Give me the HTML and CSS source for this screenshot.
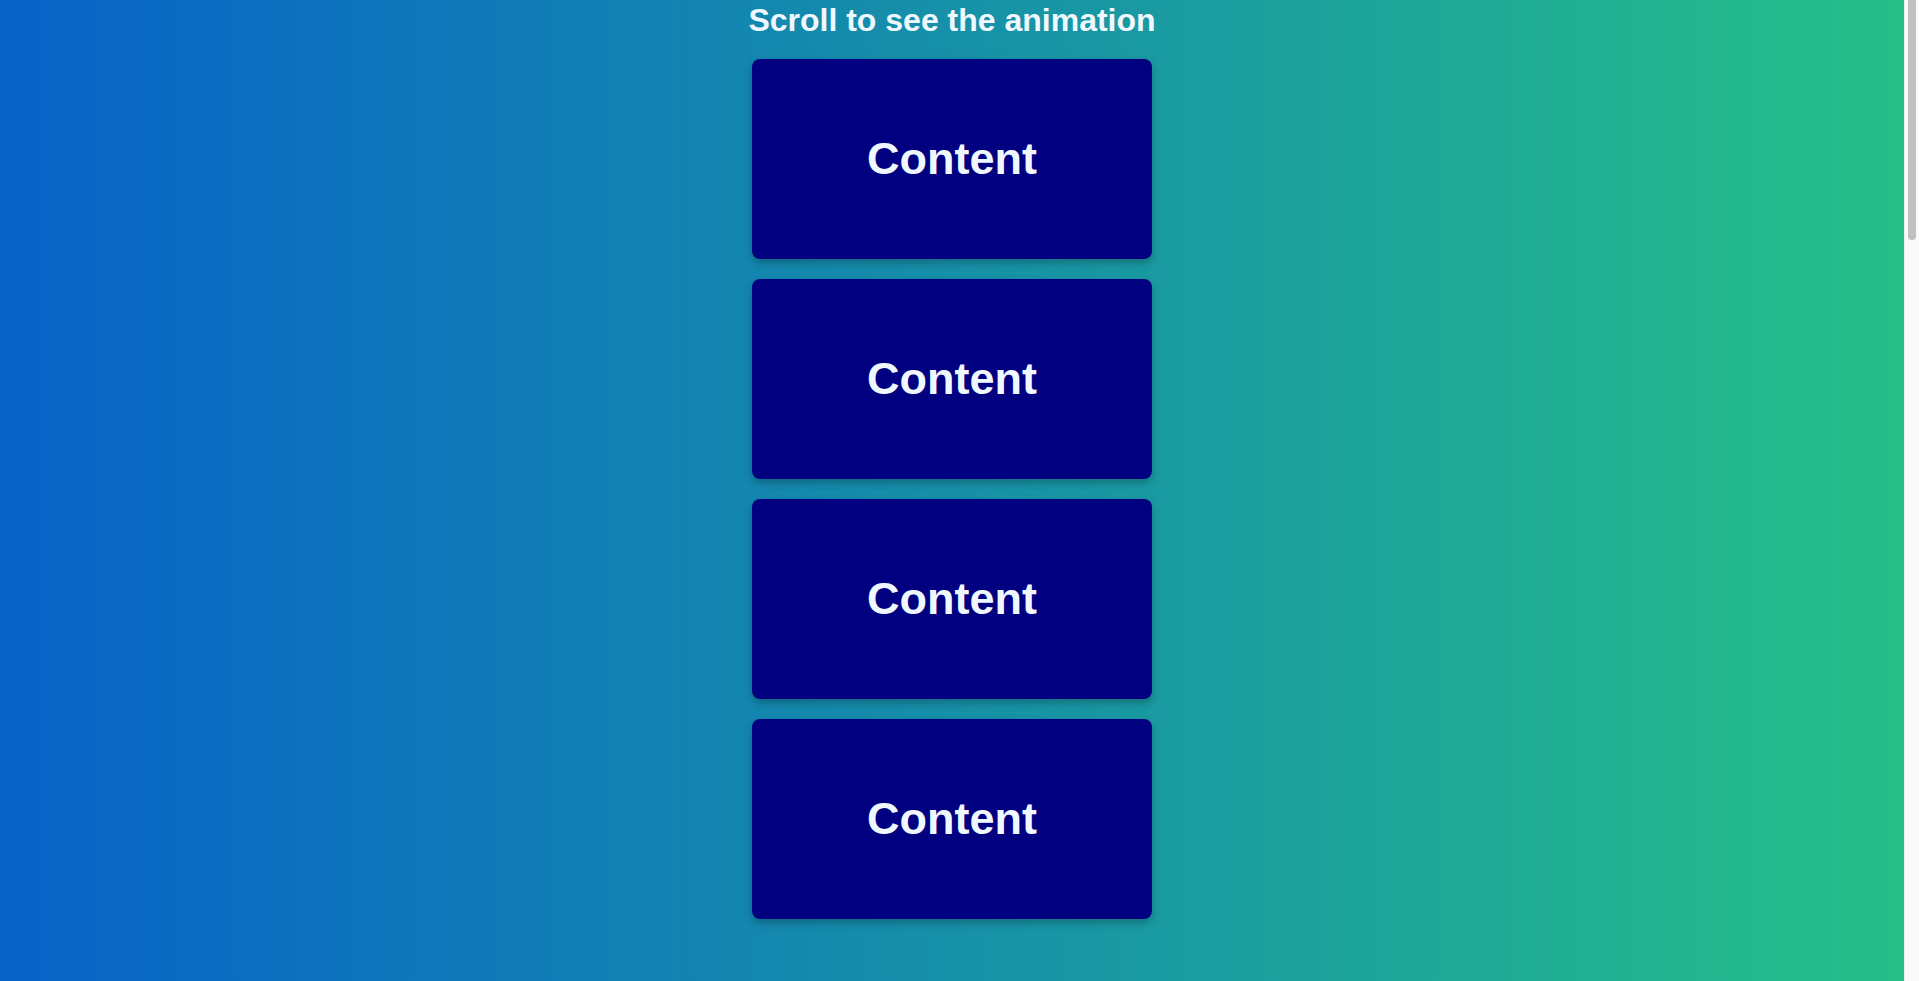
FILE: index.html
```html
<!DOCTYPE html>
<html lang="en">
<head>
<meta charset="utf-8">
<title>Scroll animation</title>
<link rel="stylesheet" href="styles.css">
</head>
<body>
<div class="viewport">
  <main class="page">
    <h1 class="title">Scroll to see the animation</h1>
    <section class="boxes">
      <div class="box">Content</div>
      <div class="box">Content</div>
      <div class="box">Content</div>
      <div class="box">Content</div>
    </section>
  </main>
  <div class="scrollbar" aria-hidden="true">
    <div class="thumb"></div>
  </div>
</div>
</body>
</html>
```

FILE: styles.css
```css
html, body {
  margin: 0;
  padding: 0;
  height: 100%;
  overflow: hidden;
}
body {
  font-family: "Liberation Sans", Arial, Helvetica, sans-serif;
  color: #f0f8ff;
}
.viewport {
  display: flex;
  height: 100vh;
}
.page {
  flex: 1;
  display: flex;
  flex-direction: column;
  align-items: center;
  background: linear-gradient(to right, #0862c9, #25bf88);
}
.title {
  margin: 0;
  padding-top: 2px;
  font-size: 32px;
  font-weight: bold;
  line-height: 36px;
}
.boxes {
  margin-top: 21px;
  display: flex;
  flex-direction: column;
  gap: 20px;
}
.box {
  width: 400px;
  height: 200px;
  background: #000080;
  border-radius: 8px;
  box-shadow: 0 4px 8px rgba(0, 0, 0, 0.25);
  display: flex;
  align-items: center;
  justify-content: center;
  font-size: 45px;
  font-weight: bold;
  color: #f0f8ff;
}
.scrollbar {
  flex: 0 0 15px;
  width: 15px;
  background: #fafafa;
  border-left: 1px solid #ececec;
  padding: 0 3px;
  box-sizing: border-box;
}
.thumb {
  height: 240px;
  background: #c1c1c1;
  border-radius: 0 0 4px 4px;
}
```
